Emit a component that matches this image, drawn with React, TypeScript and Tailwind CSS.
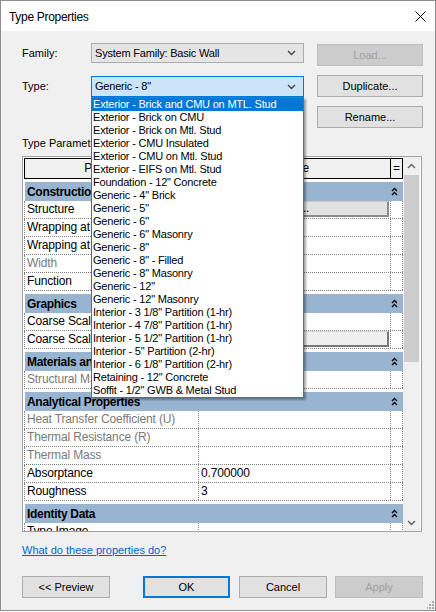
import type { ReactNode } from 'react';

const types = [
  'Exterior - Brick and CMU on MTL. Stud',
  'Exterior - Brick on CMU',
  'Exterior - Brick on Mtl. Stud',
  'Exterior - CMU Insulated',
  'Exterior - CMU on Mtl. Stud',
  'Exterior - EIFS on Mtl. Stud',
  'Foundation - 12" Concrete',
  'Generic - 4" Brick',
  'Generic - 5"',
  'Generic - 6"',
  'Generic - 6" Masonry',
  'Generic - 8"',
  'Generic - 8" - Filled',
  'Generic - 8" Masonry',
  'Generic - 12"',
  'Generic - 12" Masonry',
  'Interior - 3 1/8" Partition (1-hr)',
  'Interior - 4 7/8" Partition (1-hr)',
  'Interior - 5 1/2" Partition (1-hr)',
  'Interior - 5" Partition (2-hr)',
  'Interior - 6 1/8" Partition (2-hr)',
  'Retaining - 12" Concrete',
  'Soffit - 1/2" GWB & Metal Stud',
];

type Param = { label: string; value?: ReactNode; muted?: boolean };
type Group = { name: string; rows: Param[] };

const editButton = (
  <div className="mr-[1px] flex h-[16px] w-full items-center justify-center border border-[#c8c8c8] border-r-2 border-b-2 border-r-[#8c8c8c] border-b-[#8c8c8c] bg-[#e1e1e1]">
    Edit...
  </div>
);

const colorButton = (
  <div className="mr-[1px] flex h-[16px] w-full items-center gap-[4px] border border-[#d4d4d4] border-r-2 border-b-2 border-r-[#777777] border-b-[#777777] bg-[#efefef] pl-[2px]">
    <span className="h-[10px] w-[20px] bg-black" />
    Black
  </div>
);

const groups: Group[] = [
  {
    name: 'Construction',
    rows: [
      { label: 'Structure', value: editButton },
      { label: 'Wrapping at Inserts', value: 'Do not wrap' },
      { label: 'Wrapping at Ends', value: 'None' },
      { label: 'Width', value: '8"', muted: true },
      { label: 'Function', value: 'Exterior' },
    ],
  },
  {
    name: 'Graphics',
    rows: [
      { label: 'Coarse Scale Fill Pattern', value: '' },
      { label: 'Coarse Scale Fill Color', value: colorButton },
    ],
  },
  { name: 'Materials and Finishes', rows: [{ label: 'Structural Material', value: '', muted: true }] },
  {
    name: 'Analytical Properties',
    rows: [
      { label: 'Heat Transfer Coefficient (U)', muted: true },
      { label: 'Thermal Resistance (R)', muted: true },
      { label: 'Thermal Mass', muted: true },
      { label: 'Absorptance', value: '0.700000' },
      { label: 'Roughness', value: '3' },
    ],
  },
  { name: 'Identity Data', rows: [{ label: 'Type Image' }] },
];

function Chevron({ up = false, className = '' }: { up?: boolean; className?: string }) {
  return (
    <svg width="9" height="6" viewBox="0 0 9 6" className={className}>
      <path d={up ? 'M1 5 L4.5 1.5 L8 5' : 'M1 1 L4.5 4.5 L8 1'} fill="none" stroke="currentColor" strokeWidth="1.4" />
    </svg>
  );
}

function Collapse() {
  return (
    <svg width="7" height="9" viewBox="0 0 7 9">
      <path d="M1 4 L3.5 1.5 L6 4 M1 8 L3.5 5.5 L6 8" fill="none" stroke="#000" strokeWidth="1.3" />
    </svg>
  );
}

function Button({ children, disabled = false, primary = false, className = '' }: { children: ReactNode; disabled?: boolean; primary?: boolean; className?: string }) {
  const tone = disabled
    ? 'border border-[#bfbfbf] bg-[#cccccc] text-[#a0a0a0]'
    : primary
      ? 'border-2 border-[#0078d7] bg-[#e1e1e1] text-black'
      : 'border border-[#adadad] bg-[#e1e1e1] text-black';
  return <div className={`flex h-[22px] items-center justify-center ${tone} ${className}`}>{children}</div>;
}

function ParamRow({ row }: { row: Param }) {
  return (
    <div className="flex h-[18px] w-[379px] border-b border-l border-dotted border-[#808080] leading-[17px]">
      <div className={`w-[174px] truncate border-r border-dotted border-[#808080] pl-[2px] ${row.muted ? 'text-[#7a7a7a]' : ''}`}>{row.label}</div>
      <div className="flex w-[192px] items-start border-r border-dotted border-[#808080] pl-[2px]">{row.value}</div>
      <div className="w-[12px] border-r border-dotted border-[#808080]" />
    </div>
  );
}

export default function App() {
  return (
    <div className="relative h-[612px] w-[436px] overflow-hidden bg-white text-[11px] text-black font-['Segoe_UI','Liberation_Sans',Arial,sans-serif]">
      <div className="flex h-[611px] w-[436px] flex-col border border-[#8e8e8e] bg-[#f0f0f0]">
        {/* title bar */}
        <div className="flex h-[30px] shrink-0 items-center justify-between bg-white pl-[8px] pr-[9px]">
          <span className="pt-[2px] text-[12px] tracking-[-0.3px]">Type Properties</span>
          <svg width="11" height="11" viewBox="0 0 11 11">
            <path d="M0.5 0.5 L10.5 10.5 M10.5 0.5 L0.5 10.5" stroke="#000" strokeWidth="1" />
          </svg>
        </div>

        <div className="flex flex-col pl-[21px] pr-[12px]">
          {/* family */}
          <div className="mt-[12px] flex h-[23px]">
            <span className="w-[69px] leading-[20px]">Family:</span>
            <div className="flex h-[20px] w-[213px] items-center justify-between border border-[#acacac] bg-[#e5e5e5] pl-[3px] pr-[7px] tracking-[-0.2px]">
              <span>System Family: Basic Wall</span>
              <Chevron className="text-[#444]" />
            </div>
            <Button disabled className="ml-[13px] mt-[1px] w-[106px]">Load...</Button>
          </div>

          {/* type */}
          <div className="mt-[9px] flex h-[22px]">
            <span className="w-[69px] leading-[22px]">Type:</span>
            <div className="mt-[1px] flex h-[21px] w-[213px] items-center justify-between border border-[#0078d7] bg-[#cce4f7] pl-[3px] pr-[7px] tracking-[-0.2px]">
              <span>Generic - 8"</span>
              <Chevron className="text-[#444]" />
            </div>
            <Button className="ml-[13px] w-[106px]">Duplicate...</Button>
          </div>

          <div className="mt-[9px] flex pl-[295px]">
            <Button className="w-[106px]">Rename...</Button>
          </div>

          <span className="mt-[8px] leading-[15px]">Type Parameters</span>

          {/* property grid */}
          <div className="mt-[5px] flex h-[376px] w-[400px] border border-[#a0a0a0] bg-white text-[12px] tracking-[-0.15px]">
            <div className="h-full w-[380px] overflow-hidden pl-[1px] pt-[1px]">
              <div className="flex h-[21px] w-[379px] border border-black bg-[#f0f0f0] leading-[19px]">
                <div className="w-[174px] border-r border-black text-center">Parameter</div>
                <div className="w-[192px] border-r border-black text-center">Value</div>
                <div className="w-[11px] text-center">=</div>
              </div>
              {groups.map((group) => (
                <div key={group.name}>
                  <div className="ml-[1px] mt-[3px] flex h-[19px] w-[378px] items-center bg-[#99b4d1] pl-[2px] font-bold tracking-[-0.3px]">
                    <span className="flex-1">{group.name}</span>
                    <span className="flex w-[12px] justify-start">
                      <Collapse />
                    </span>
                  </div>
                  {group.rows.map((row) => (
                    <ParamRow key={row.label} row={row} />
                  ))}
                </div>
              ))}
            </div>
            <div className="flex w-[17px] flex-col bg-[#f0f0f0]">
              <div className="flex h-[17px] items-center justify-center text-[#606060]">
                <Chevron up />
              </div>
              <div className="mx-[1px] mt-[1px] h-[187px] bg-[#cdcdcd]" />
              <div className="flex-1" />
              <div className="flex h-[17px] items-center justify-center text-[#606060]">
                <Chevron />
              </div>
            </div>
          </div>

          <span className="mt-[11px] leading-[15px] text-[#0066cc] underline">What do these properties do?</span>

          {/* footer buttons */}
          <div className="mt-[18px] flex">
            <Button className="w-[88px]">&lt;&lt; Preview</Button>
            <Button primary className="ml-[33px] w-[87px]">OK</Button>
            <Button className="ml-[9px] w-[88px]">Cancel</Button>
            <Button disabled className="ml-[8px] w-[88px]">Apply</Button>
          </div>
        </div>
      </div>

      {/* open type list */}
      <div className="absolute left-[91px] top-[97px] w-[213px] border border-[#2b79c2] bg-white tracking-[-0.2px] shadow-[2px_2px_2px_rgba(0,0,0,0.35)]">
        {types.map((t, i) => (
          <div key={t} className={`h-[13px] whitespace-nowrap pl-[1px] leading-[13px] ${i === 0 ? 'bg-[#0078d7] text-white' : ''}`}>
            {t}
          </div>
        ))}
      </div>

      {/* resize grip */}
      <svg className="absolute left-[427px] top-[601px]" width="8" height="8" viewBox="0 0 8 8">
        <rect x="5" y="0" width="2" height="2" fill="#a8a8a8" />
        <rect x="2" y="3" width="2" height="2" fill="#a8a8a8" />
        <rect x="5" y="3" width="2" height="2" fill="#a8a8a8" />
        <rect x="-1" y="6" width="2" height="2" fill="#a8a8a8" />
        <rect x="2" y="6" width="2" height="2" fill="#a8a8a8" />
        <rect x="5" y="6" width="2" height="2" fill="#a8a8a8" />
      </svg>
    </div>
  );
}
